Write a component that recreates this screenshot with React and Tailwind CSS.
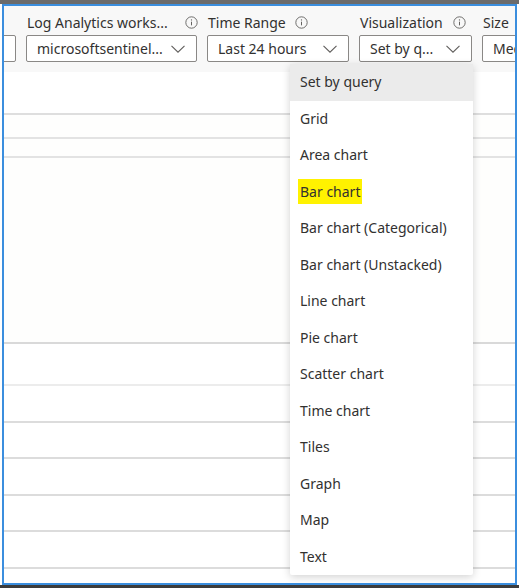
const font = { fontFamily: '"Segoe UI", "Noto Sans", "Open Sans", sans-serif' };

function InfoIcon() {
  return (
    <svg className="w-[13px] h-[13px] text-[#605e5c]" viewBox="0 0 16 16" fill="none">
      <circle cx="8" cy="8" r="7" stroke="currentColor" strokeWidth="1.1" />
      <path d="M8 7v4.5" stroke="currentColor" strokeWidth="1.2" />
      <circle cx="8" cy="4.8" r="0.8" fill="currentColor" />
    </svg>
  );
}

function Chevron() {
  return (
    <svg className="w-[14px] h-[8px] text-[#605e5c] shrink-0" viewBox="0 0 14 8" fill="none">
      <path d="M0.5 0.8L7 7.2L13.5 0.8" stroke="currentColor" strokeWidth="1.1" />
    </svg>
  );
}

function Param({ label, value, width, info = true, iconGap = "ml-[16px]" }) {
  return (
    <div className="flex flex-col shrink-0" style={{ width }}>
      <div className="h-[20px] flex items-center pl-[1px] text-[14px] text-[#323130] whitespace-nowrap">
        {label && <span>{label}</span>}
        {label && info && (
          <span className={iconGap}>
            <InfoIcon />
          </span>
        )}
      </div>
      <div className="mt-[3px] h-[27px] border border-[#8a8886] rounded-[2px] bg-white flex items-center pl-[10px] pr-[11px] text-[14px] text-[#323130]">
        <span className="flex-1 whitespace-nowrap overflow-hidden">{value}</span>
        <Chevron />
      </div>
    </div>
  );
}

const items = [
  "Set by query",
  "Grid",
  "Area chart",
  "Bar chart",
  "Bar chart (Categorical)",
  "Bar chart (Unstacked)",
  "Line chart",
  "Pie chart",
  "Scatter chart",
  "Time chart",
  "Tiles",
  "Graph",
  "Map",
  "Text",
];

const rows = [
  { h: "h-[43px]", bg: "bg-white", line: "border-[#dedede]" },
  { h: "h-[24px]", bg: "bg-[#fefefd]", line: "border-[#e3e3e3]" },
  { h: "h-[19px]", bg: "bg-[#fefefd]", line: "border-[#e3e3e3]" },
  { h: "h-[186px]", bg: "bg-[#fefefd]", line: "border-[#d9d9d9]" },
  { h: "h-[42px]", bg: "bg-white", line: "border-[#ececec]" },
  { h: "h-[37px]", bg: "bg-white", line: "border-[#dcdcdc]" },
  { h: "h-[36px]", bg: "bg-white", line: "border-[#dcdcdc]" },
  { h: "h-[37px]", bg: "bg-white", line: "border-[#dcdcdc]" },
  { h: "h-[36px]", bg: "bg-white", line: "border-[#dcdcdc]" },
  { h: "h-[37px]", bg: "bg-white", line: "border-[#dcdcdc]" },
];

export default function App() {
  return (
    <div className="w-[519px] h-[588px] bg-white overflow-hidden flex flex-col" style={font}>
      <div className="h-[4px] bg-[#6b6b6b] shrink-0" />
      <div className="relative mx-[2px] h-[581px] border-2 border-[#3b8ede] bg-white overflow-hidden shrink-0">
        {/* parameters bar */}
        <div className="h-[66px] bg-[#f8f8f8] pt-[6px] flex gap-[10px] -ml-[88px]">
          <Param label="" value="" width="100px" info={false} />
          <Param label="Log Analytics works..." value="microsoftsentinel..." width="171px" iconGap="ml-[17px]" />
          <Param label="Time Range" value="Last 24 hours" width="142px" iconGap="ml-[9px]" />
          <Param label="Visualization" value="Set by q..." width="113px" iconGap="ml-[10px]" />
          <Param label="Size" value="Medium" width="100px" info={false} />
        </div>

        {/* grid rows */}
        <div className="flex flex-col">
          {rows.map((r, i) => (
            <div key={i} className={`${r.h} ${r.bg} border-b-2 ${r.line} shrink-0`} />
          ))}
        </div>

        {/* visualization menu */}
        <div className="absolute left-[286px] top-[58px] w-[183px] bg-white rounded-[2px] shadow-[0_2px_8px_rgba(0,0,0,0.18)] flex flex-col">
          {items.map((it, i) => (
            <div
              key={it}
              className={`h-[36.5px] flex items-center pl-[10px] pb-[1px] text-[14px] text-[#323130] whitespace-nowrap ${
                i === 0 ? "bg-[#ebebeb]" : ""
              }`}
            >
              {it === "Bar chart" ? (
                <span className="bg-[#fff200] -ml-[2px] px-[2px] py-[2px]">{it}</span>
              ) : (
                it
              )}
            </div>
          ))}
        </div>
      </div>
      <div className="flex-1 bg-[#3c3c3c]" />
    </div>
  );
}
